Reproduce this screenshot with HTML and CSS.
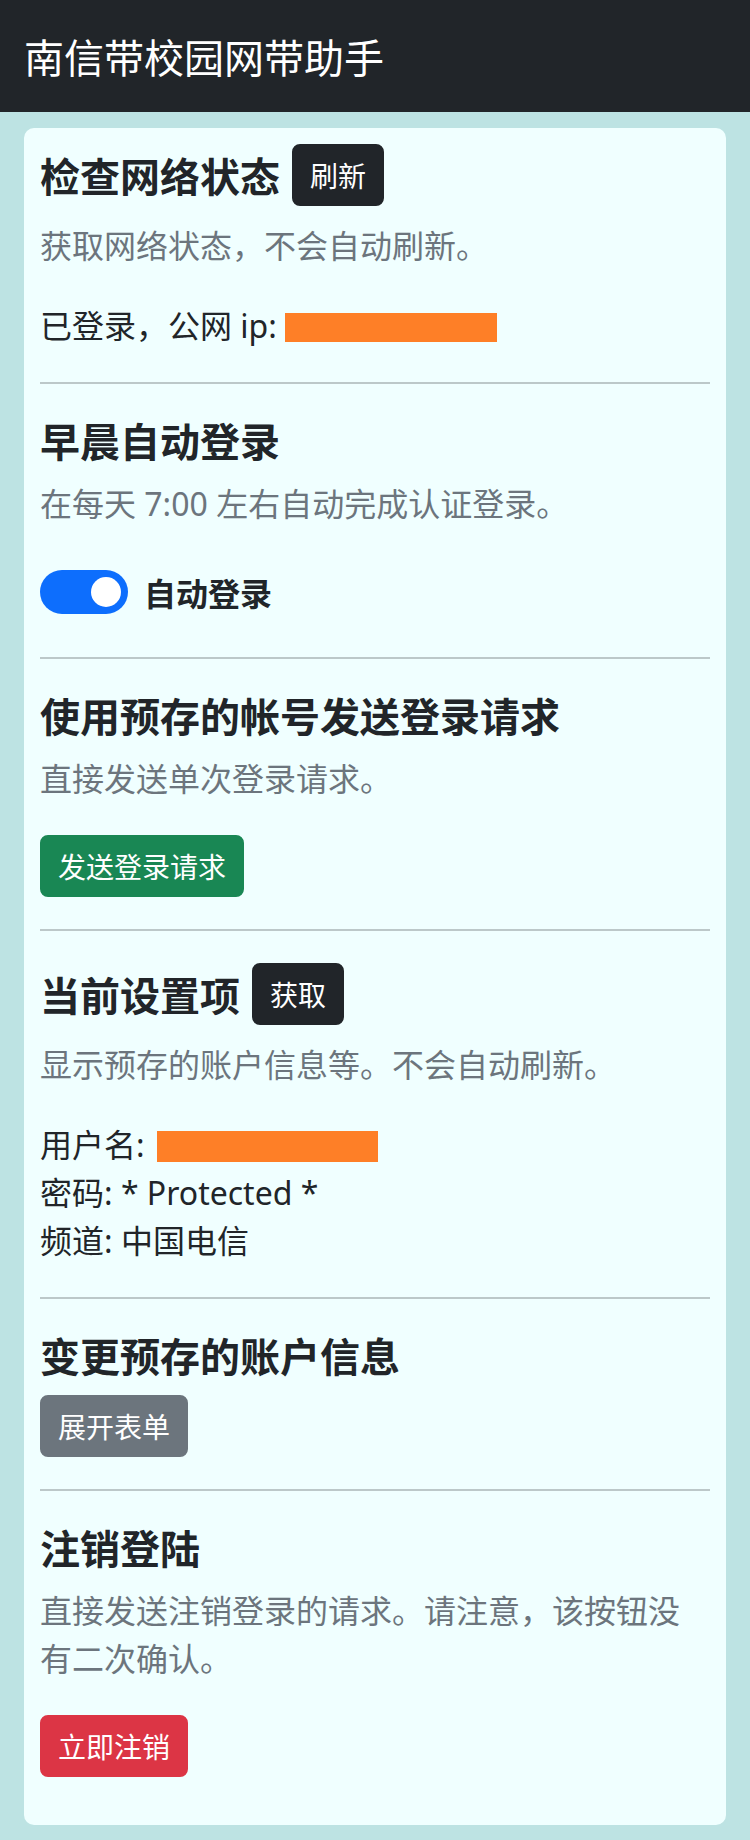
FILE: index.html
```html
<!DOCTYPE html>
<html lang="zh-CN">
<head>
<meta charset="utf-8">
<title>南信带校园网带助手</title>
<link rel="stylesheet" href="styles.css">
</head>
<body>
<header class="navbar"><span class="brand">南信带校园网带助手</span></header>
<main class="page">
  <div class="card">
    <section class="sec">
      <div class="head-row"><h2 class="title">检查网络状态</h2><button class="btn btn-dark">刷新</button></div>
      <p class="muted">获取网络状态，不会自动刷新。</p>
      <p class="text">已登录，公网 ip: <span class="redact redact-ip"></span></p>
    </section>
    <hr class="divider">
    <section class="sec">
      <h2 class="title">早晨自动登录</h2>
      <p class="muted">在每天 7:00 左右自动完成认证登录。</p>
      <div class="switch-row">
        <span class="switch"><span class="knob"></span></span>
        <span class="switch-label">自动登录</span>
      </div>
    </section>
    <hr class="divider">
    <section class="sec">
      <h2 class="title">使用预存的帐号发送登录请求</h2>
      <p class="muted">直接发送单次登录请求。</p>
      <button class="btn btn-green">发送登录请求</button>
    </section>
    <hr class="divider">
    <section class="sec">
      <div class="head-row"><h2 class="title">当前设置项</h2><button class="btn btn-dark">获取</button></div>
      <p class="muted">显示预存的账户信息等。不会自动刷新。</p>
      <div class="info">
        <div class="text">用户名: <span class="redact redact-user"></span></div>
        <div class="text">密码: * Protected *</div>
        <div class="text">频道: 中国电信</div>
      </div>
    </section>
    <hr class="divider">
    <section class="sec">
      <h2 class="title">变更预存的账户信息</h2>
      <button class="btn btn-gray">展开表单</button>
    </section>
    <hr class="divider">
    <section class="sec last">
      <h2 class="title">注销登陆</h2>
      <p class="muted">直接发送注销登录的请求。请注意，该按钮没有二次确认。</p>
      <button class="btn btn-red">立即注销</button>
    </section>
  </div>
</main>
</body>
</html>
```

FILE: styles.css
```css
* { box-sizing: border-box; }
html, body { margin: 0; padding: 0; }
body {
  background: #bde3e3;
  font-family: "Noto Sans", "Noto Sans CJK SC", sans-serif;
  color: #212529;
  font-size: 32px;
  line-height: 48px;
  width: 750px;
  min-height: 1840px;
}
.navbar {
  height: 112px;
  background: #212529;
  display: flex;
  align-items: center;
  padding: 0 24px;
}
.brand {
  color: #fff;
  font-size: 40px;
  line-height: 60px;
  font-family: "Noto Sans CJK SC", sans-serif;
}
.page {
  padding: 16px 24px 17px;
}
.card {
  background: #f0ffff;
  border-radius: 10px;
  padding: 16px 16px 48px;
}
.sec { display: flex; flex-direction: column; align-items: flex-start; }
.head-row {
  display: flex;
  align-items: center;
  gap: 12px;
  margin-bottom: 16px;
}
.head-row .title { margin: 0; }
.title {
  font-family: "Noto Sans CJK SC", sans-serif;
  font-size: 40px;
  line-height: 48px;
  font-weight: 700;
  margin: 0 0 16px;
  color: #212529;
}
.muted {
  color: #6c757d;
  margin: 0 0 32px;
}
.text { margin: 0; }
.sec > p.text { margin: 0; }
.redact {
  display: inline-block;
  background: #fe7f27;
  vertical-align: middle;
}
.redact-ip { width: 212px; height: 29px; margin-top: -4px; }
.redact-user { width: 221px; height: 31px; margin-top: -4px; margin-left: 4px; }
.divider {
  border: 0;
  border-top: 2px solid #bcc8c9;
  margin: 32px 0;
  height: 0;
}
.switch-row {
  display: flex;
  align-items: center;
  gap: 16px;
  height: 64px;
  margin-bottom: 1px;
}
.switch {
  width: 88px;
  height: 44px;
  border-radius: 22px;
  background: #0d6efd;
  display: flex;
  align-items: center;
  justify-content: flex-end;
  padding-right: 7px;
}
.knob {
  width: 30px;
  height: 30px;
  border-radius: 50%;
  background: #fff;
}
.switch-label {
  font-family: "Noto Sans CJK SC", sans-serif;
  font-weight: 700;
  font-size: 32px;
}
.btn {
  font-family: "Noto Sans CJK SC", sans-serif;
  font-size: 28px;
  line-height: 42px;
  padding: 8px 16px;
  border: 2px solid transparent;
  border-radius: 8px;
  color: #fff;
  cursor: pointer;
  margin: 0;
}
.btn-dark { background: #212529; border-color: #212529; }
.btn-green { background: #198754; border-color: #198754; }
.btn-gray { background: #6c757d; border-color: #6c757d; }
.btn-red { background: #dc3545; border-color: #dc3545; }
.info { display: flex; flex-direction: column; }
```
